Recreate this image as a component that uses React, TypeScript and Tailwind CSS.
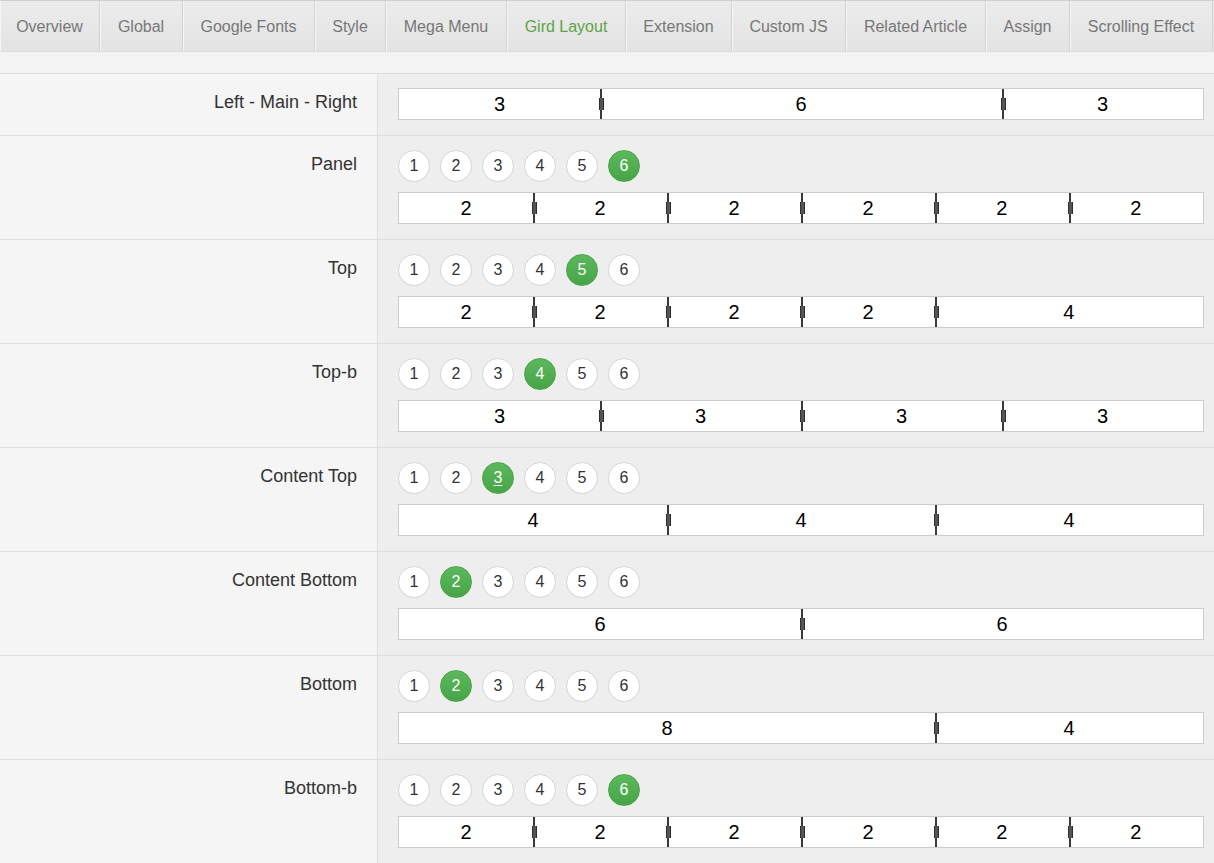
import React from "react";

const tabs = [
  { name: "Overview", w: 100 },
  { name: "Global", w: 83 },
  { name: "Google Fonts", w: 132 },
  { name: "Style", w: 71 },
  { name: "Mega Menu", w: 121 },
  { name: "Gird Layout", w: 119 },
  { name: "Extension", w: 106 },
  { name: "Custom JS", w: 114 },
  { name: "Related Article", w: 140 },
  { name: "Assign", w: 84 },
  { name: "Scrolling Effect", w: 143 },
];

type Row = { label: string; active?: number; cols: number[]; underline?: boolean };

const rows: Row[] = [
  { label: "Left - Main - Right", cols: [3, 6, 3] },
  { label: "Panel", active: 6, cols: [2, 2, 2, 2, 2, 2] },
  { label: "Top", active: 5, cols: [2, 2, 2, 2, 4] },
  { label: "Top-b", active: 4, cols: [3, 3, 3, 3] },
  { label: "Content Top", active: 3, cols: [4, 4, 4], underline: true },
  { label: "Content Bottom", active: 2, cols: [6, 6] },
  { label: "Bottom", active: 2, cols: [8, 4] },
  { label: "Bottom-b", active: 6, cols: [2, 2, 2, 2, 2, 2] },
];

function Divider() {
  return (
    <div className="absolute right-[-1px] top-0 bottom-0 w-0 z-10">
      <div className="absolute left-[-1px] top-0 bottom-0 w-[2px] bg-[#3a3a3a]" />
      <div className="absolute left-[-2px] top-1/2 -translate-y-1/2 h-[12px] w-[5px] bg-[#555] border-x border-[#2f2f2f]" />
    </div>
  );
}

function Bar({ cols }: { cols: number[] }) {
  return (
    <div className="flex h-[32px] w-full border border-[#ccc] bg-white">
      {cols.map((c, i) => (
        <div
          key={i}
          className="relative flex items-center justify-center text-[20px] text-black"
          style={{ width: `${(c / 12) * 100}%` }}
        >
          {c}
          {i < cols.length - 1 && <Divider />}
        </div>
      ))}
    </div>
  );
}

function Circles({ active, underline }: { active: number; underline?: boolean }) {
  return (
    <div className="flex gap-[10px] mb-[10px]">
      {[1, 2, 3, 4, 5, 6].map((n) =>
        n === active ? (
          <div
            key={n}
            className="flex h-[32px] w-[32px] items-center justify-center rounded-full border border-[#47a447] bg-gradient-to-b from-[#5cb85c] to-[#47a447] text-[16px] text-white"
          >
            <span className={underline ? "underline underline-offset-2" : ""}>{n}</span>
          </div>
        ) : (
          <div
            key={n}
            className="flex h-[32px] w-[32px] items-center justify-center rounded-full border border-[#d5d5d5] bg-white text-[16px] text-[#333]"
          >
            {n}
          </div>
        )
      )}
    </div>
  );
}

export default function App() {
  return (
    <div
      className="w-[1214px] h-[863px] overflow-hidden bg-[#f4f4f4]"
      style={{ fontFamily: '"Liberation Sans", Arial, sans-serif' }}
    >
      <div className="flex h-[52px] border-t border-[#cfcfcf] border-b border-b-[#dcdcdc] bg-gradient-to-b from-[#ececec] to-[#e3e3e3]">
        {tabs.map((t) => (
          <div
            key={t.name}
            className={`flex shrink-0 items-center justify-center pt-[2px] border-r border-[#d2d2d2] text-[16px] shadow-[inset_1px_0_0_#f6f6f6] ${
              t.name === "Gird Layout" ? "text-[#5da34a]" : "text-[#777]"
            }`}
            style={{ width: t.w }}
          >
            {t.name}
          </div>
        ))}
      </div>
      <div className="h-[21px] bg-[#f3f3f3]" />
      <div className="border-t border-[#dddddd]">
        {rows.map((r, idx) => (
          <div key={idx} className="flex border-b border-[#dddddd]">
            <div className="w-[378px] shrink-0 border-r border-[#e2e2e2] bg-[#f5f5f5] pr-[20px] pt-[17px] text-right text-[18px] leading-[22px] text-[#333]">
              {r.label}
            </div>
            <div className="flex-1 bg-[#eeeeee] pl-[20px] pr-[10px] pt-[14px] pb-[15px]">
              {r.active !== undefined && <Circles active={r.active} underline={r.underline} />}
              <Bar cols={r.cols} />
            </div>
          </div>
        ))}
      </div>
    </div>
  );
}
